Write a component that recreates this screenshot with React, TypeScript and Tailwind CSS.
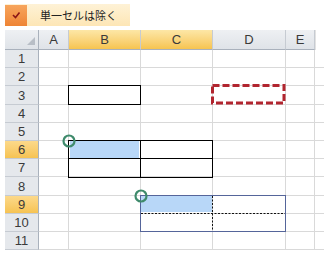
import React from "react";

const cols = ["A", "B", "C", "D", "E"];
const rowHeights = [18, 18, 19, 18, 18, 18, 18, 19, 18, 18, 18];
const selCols = ["B", "C"];
const selRows = [6, 9];

const font = { fontFamily: '"Liberation Sans", Arial, "Noto Sans CJK JP", sans-serif' };

function HeaderCell({ label }: { label: string }) {
  const sel = selCols.includes(label);
  return (
    <div
      className={
        "flex items-center justify-center border-r border-b border-r-[#c6cbd2] border-b-[#a9b1bc] text-[13px] leading-none text-[#3a3a3a] " +
        (sel ? "bg-linear-to-b from-[#fde7a6] to-[#f6c44f]" : "bg-linear-to-b from-[#eef0f3] to-[#dfe3e8]")
      }
    >
      {label}
    </div>
  );
}

export default function App() {
  return (
    <div className="relative w-[324px] h-[256px] overflow-hidden bg-white" style={font}>
      {/* option button */}
      <div className="ml-[5px] mt-[4px] flex h-[22px] w-[125px] items-center bg-linear-to-b from-[#fef2d6] to-[#fde6b5]">
        <div className="flex h-[21px] w-[22px] items-center justify-center bg-linear-to-b from-[#f7a55c] to-[#ee8434]">
          <svg width="10" height="8" viewBox="0 0 10 8">
            <polyline points="2,4 4.5,6.5 8.5,1.5" fill="none" stroke="#8a1616" strokeWidth="1.6" />
          </svg>
        </div>
        <span className="ml-[13px] text-[11px] text-[#222]" style={{ fontFamily: '"Noto Sans CJK JP", sans-serif' }}>
          単一セルは除く
        </span>
      </div>

      {/* sheet grid */}
      <div
        className="ml-[5px] mt-[4px] grid grid-cols-[34px_30px_72px_72px_73px_29px_10px]"
        style={{ gridTemplateRows: `20px ${rowHeights.map((h) => h + "px").join(" ")}` }}
      >
        <div className="relative border-r border-b border-r-[#a9b1bc] border-b-[#a9b1bc] bg-linear-to-b from-[#eef0f3] to-[#dfe3e8]">
          <svg className="absolute right-[3px] bottom-[4px]" width="8" height="8" viewBox="0 0 8 8">
            <polygon points="8,0 8,8 0,8" fill="#b8bec6" />
          </svg>
        </div>
        {cols.map((c) => (
          <HeaderCell key={c} label={c} />
        ))}
        <div className="border-l border-[#e2e2e2]" />

        {rowHeights.map((_, i) => {
          const r = i + 1;
          const sel = selRows.includes(r);
          return (
            <React.Fragment key={r}>
              <div
                className={
                  "flex items-center justify-center border-r border-b border-r-[#a9b1bc] border-b-[#c6cbd2] text-[13px] leading-none text-[#3a3a3a] " +
                  (sel ? "bg-linear-to-b from-[#fcd98a] to-[#f6c352]" : "bg-[#e5e8ec]")
                }
              >
                {r}
              </div>
              {cols.map((c) => (
                <div key={c} className="border-r border-b border-[#d9d9d9]" />
              ))}
              <div className="border-b border-[#d9d9d9]" />
            </React.Fragment>
          );
        })}
      </div>

      {/* B3 border */}
      <div className="absolute left-[68px] top-[85px] h-[20px] w-[73px] border border-black" />

      {/* D3 copy marquee */}
      <svg className="absolute left-[211px] top-[84px]" width="75" height="21" viewBox="0 0 75 21">
        <rect x="1.5" y="1.5" width="71.5" height="17.5" fill="none" stroke="#b1252f" strokeWidth="3" strokeDasharray="7 3" />
      </svg>

      {/* B6:C7 */}
      <div className="absolute left-[70px] top-[141px] h-[17px] w-[69px] bg-[#b8d7f8]" />
      <div className="absolute left-[68px] top-[140px] h-[38px] w-[145px] border border-black">
        <div className="absolute left-[71px] top-0 h-full w-px bg-black" />
        <div className="absolute left-0 top-[17px] h-px w-full bg-black" />
      </div>

      {/* C9:D10 */}
      <div className="absolute left-[141px] top-[196px] h-[16px] w-[71px] bg-[#b8d7f8]" />
      <div className="absolute left-[140px] top-[195px] h-[37px] w-[146px] border border-[#55659a]" />
      <svg className="absolute left-[140px] top-[195px]" width="146" height="37" viewBox="0 0 146 37">
        <line x1="72.5" y1="1" x2="72.5" y2="36" stroke="#111" strokeWidth="1" strokeDasharray="2 1.5" />
        <line x1="1" y1="18.5" x2="145" y2="18.5" stroke="#111" strokeWidth="1" strokeDasharray="2 1.5" />
      </svg>

      {/* corner markers */}
      <svg className="absolute left-[62px] top-[134px]" width="15" height="15" viewBox="0 0 15 15">
        <circle cx="7" cy="7" r="5.5" fill="none" stroke="#3f8b6c" strokeWidth="2.2" />
      </svg>
      <svg className="absolute left-[134px] top-[189px]" width="15" height="15" viewBox="0 0 15 15">
        <circle cx="7" cy="7" r="5.5" fill="none" stroke="#3f8b6c" strokeWidth="2.2" />
      </svg>
    </div>
  );
}
